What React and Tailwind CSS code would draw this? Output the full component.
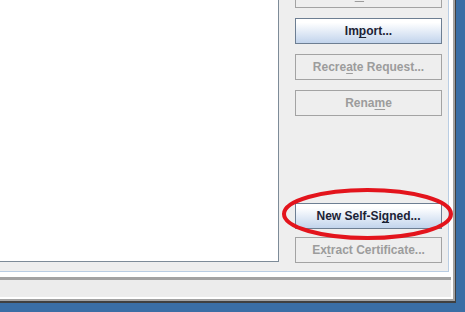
import React from "react";

const U = ({ children }) => (
  <span className="underline decoration-1 underline-offset-2 [text-decoration-skip-ink:none]">
    {children}
  </span>
);

function Btn({ enabled, className = "", children }) {
  const base =
    "h-[26px] w-[147px] shrink-0 flex items-center justify-center border text-[12px] leading-[14px] font-bold whitespace-nowrap";
  const look = enabled
    ? "border-[#6d7e92] bg-linear-to-b from-white from-15% to-[#c2d4ec] text-[#1b2235]"
    : "border-[#a3a3a3] bg-[#eeeeee] text-[#9c9c9c]";
  return <div className={`${base} ${look} ${className}`}>{children}</div>;
}

export default function App() {
  return (
    <div className="relative w-[465px] h-[312px] overflow-hidden bg-[#3a6ea5] font-['Liberation_Sans',Arial,sans-serif]">
      <div className="w-[456px] h-[303px] border-r border-b-2 border-[#404040]">
        <div className="h-full border-r-2 border-b-2 border-[#a3a3a3]">
          <div className="h-full border-r-2 border-b-2 border-white flex flex-col bg-white">
            <div className="h-[277px] shrink-0 bg-white">
              <div className="w-[449px] h-[272px] flex border-r border-b border-[#b9cde3] bg-[#eeeeee] overflow-hidden">
                <div className="w-[279px] h-[262px] shrink-0 bg-white border-r border-b border-[#7d8b98]" />
                <div className="ml-[16px] -mt-[18px] flex flex-col">
                  <Btn>
                    Vie<U>w</U>/Edit...
                  </Btn>
                  <Btn enabled className="mt-[10px]">
                    Im<U>p</U>ort...
                  </Btn>
                  <Btn className="mt-[10px]">
                    Recre<U>a</U>te Request...
                  </Btn>
                  <Btn className="mt-[10px]">
                    Rena<U>m</U>e
                  </Btn>
                  <Btn enabled className="mt-[87px]">
                    New Self-Si<U>g</U>ned...
                  </Btn>
                  <Btn className="mt-[8px]">
                    Ex<U>t</U>ract Certificate...
                  </Btn>
                </div>
              </div>
            </div>
            <div className="flex-1 border-t-[3px] border-[#a2a2a2] bg-[#ececec]" />
          </div>
        </div>
      </div>
      <svg
        className="absolute left-0 top-0 pointer-events-none"
        width="465"
        height="312"
        viewBox="0 0 465 312"
      >
        <ellipse
          cx="367.5"
          cy="214"
          rx="83.5"
          ry="24"
          fill="none"
          stroke="#e3141c"
          strokeWidth="4"
        />
      </svg>
    </div>
  );
}
